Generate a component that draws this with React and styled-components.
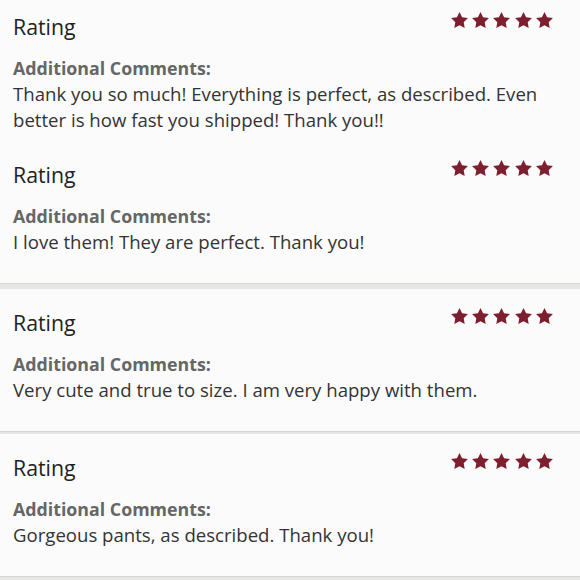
import React from "react";
import styled, { createGlobalStyle } from "styled-components";

const Global = createGlobalStyle`
  html, body { margin: 0; padding: 0; background: #e6e6e4; }
  body { font-family: "Open Sans", "Lato", sans-serif; -webkit-font-smoothing: antialiased; }
`;

const Page = styled.div`
  width: 580px;
  height: 580px;
  overflow: hidden;
  background: #e6e6e4;
  display: flex;
  flex-direction: column;
`;

const Card = styled.section`
  background: #fbfbfb;
  padding: 7px 0 13px;
  border-bottom: 1px solid #d6d6d4;
  margin-bottom: ${(p) => p.$gap}px;
  &:first-child { padding-top: 0; }
`;

const Review = styled.article`
  padding: 12px 27px 15px 13px;
  display: flex;
  flex-direction: column;
`;

const Header = styled.div`
  display: flex;
  justify-content: space-between;
  align-items: flex-start;
`;

const Title = styled.h3`
  margin: 0;
  font-size: 21.3px;
  line-height: 30px;
  font-weight: 400;
  color: #222;
`;

const Stars = styled.div`
  display: flex;
  gap: 4.3px;
`;

const Label = styled.div`
  margin-top: 15px;
  font-size: 17.8px;
  line-height: 22px;
  font-weight: 700;
  color: #666;
`;

const Comment = styled.p`
  margin: 2px 0 0;
  font-size: 18.6px;
  line-height: 26px;
  color: #333;
`;

const Star = () => (
  <svg width="17" height="16" viewBox="2 2 20 19.02" aria-hidden="true">
    <polygon
      points="12,2 15.09,8.26 22,9.27 17,14.14 18.18,21.02 12,17.77 5.82,21.02 7,14.14 2,9.27 8.91,8.26"
      fill="#7e1f2f"
    />
  </svg>
);

const groups = [
  {
    gap: 5,
    items: [
      "Thank you so much! Everything is perfect, as described. Even better is how fast you shipped! Thank you!!",
      "I love them! They are perfect. Thank you!",
    ],
  },
  { gap: 2, items: ["Very cute and true to size. I am very happy with them."] },
  { gap: 3, items: ["Gorgeous pants, as described. Thank you!"] },
];

export default function App() {
  return (
    <>
      <Global />
      <Page>
        {groups.map((g, gi) => (
          <Card key={gi} $gap={g.gap}>
            {g.items.map((text, i) => (
              <Review key={i}>
                <Header>
                  <Title>Rating</Title>
                  <Stars>
                    {[0, 1, 2, 3, 4].map((s) => (
                      <Star key={s} />
                    ))}
                  </Stars>
                </Header>
                <Label>Additional Comments:</Label>
                <Comment>{text}</Comment>
              </Review>
            ))}
          </Card>
        ))}
      </Page>
    </>
  );
}
